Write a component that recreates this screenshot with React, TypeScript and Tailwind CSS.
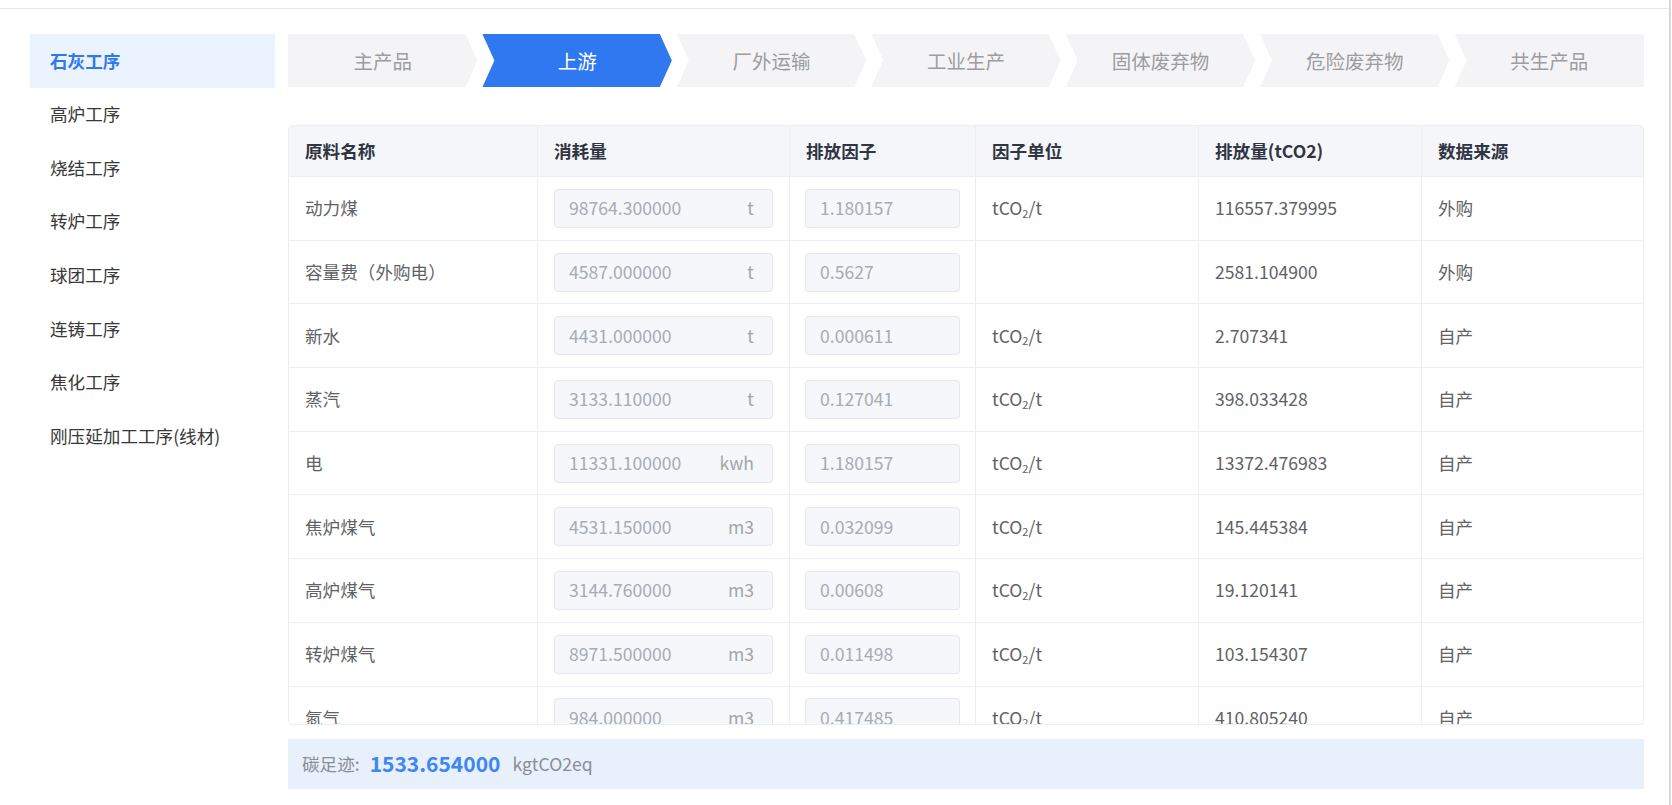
import React from "react";

const processes = [
  "石灰工序",
  "高炉工序",
  "烧结工序",
  "转炉工序",
  "球团工序",
  "连铸工序",
  "焦化工序",
  "刚压延加工工序(线材)",
];

const steps = ["主产品", "上游", "厂外运输", "工业生产", "固体废弃物", "危险废弃物", "共生产品"];

const rows = [
  { name: "动力煤", amount: "98764.300000", unit: "t", factor: "1.180157", fu: true, emission: "116557.379995", source: "外购" },
  { name: "容量费（外购电）", amount: "4587.000000", unit: "t", factor: "0.5627", fu: false, emission: "2581.104900", source: "外购" },
  { name: "新水", amount: "4431.000000", unit: "t", factor: "0.000611", fu: true, emission: "2.707341", source: "自产" },
  { name: "蒸汽", amount: "3133.110000", unit: "t", factor: "0.127041", fu: true, emission: "398.033428", source: "自产" },
  { name: "电", amount: "11331.100000", unit: "kwh", factor: "1.180157", fu: true, emission: "13372.476983", source: "自产" },
  { name: "焦炉煤气", amount: "4531.150000", unit: "m3", factor: "0.032099", fu: true, emission: "145.445384", source: "自产" },
  { name: "高炉煤气", amount: "3144.760000", unit: "m3", factor: "0.00608", fu: true, emission: "19.120141", source: "自产" },
  { name: "转炉煤气", amount: "8971.500000", unit: "m3", factor: "0.011498", fu: true, emission: "103.154307", source: "自产" },
  { name: "氮气", amount: "984.000000", unit: "m3", factor: "0.417485", fu: true, emission: "410.805240", source: "自产" },
];

const cols = "grid grid-cols-[249px_252px_186px_223px_223px_1fr]";

function Step({ label, index, active }: { label: string; index: number; active: boolean }) {
  const first = index === 0;
  const last = index === steps.length - 1;
  const shape = first
    ? "[clip-path:polygon(0_0,calc(100%_-_12px)_0,100%_50%,calc(100%_-_12px)_100%,0_100%)]"
    : last
    ? "[clip-path:polygon(0_0,100%_0,100%_100%,0_100%,12px_50%)]"
    : "[clip-path:polygon(0_0,calc(100%_-_12px)_0,100%_50%,calc(100%_-_12px)_100%,0_100%,12px_50%)]";
  return (
    <div
      className={`flex-1 h-[53px] flex items-center justify-center text-[19.5px] ${shape} ${
        active ? "bg-[#2f78ef] text-white" : "bg-[#f4f4f6] text-[#9d9d9f]"
      }`}
    >
      {label}
    </div>
  );
}

function Field({ value, unit }: { value: string; unit?: string }) {
  return (
    <div className="h-[39px] w-full flex items-center justify-between rounded-[4px] border border-[#e4e7ed] bg-[#f5f7fa] pl-[14px] pr-[18px] text-[#a8abb2]">
      <span>{value}</span>
      {unit && <span className="text-[#a3a5aa]">{unit}</span>}
    </div>
  );
}

function FactorUnit() {
  return (
    <span>
      tCO<sub className="text-[11px]">2</sub>/t
    </span>
  );
}

export default function App() {
  return (
    <div className="w-[1671px] h-[805px] overflow-hidden bg-white border-r-2 border-[#d9d9d9] font-['Noto_Sans_CJK_SC',sans-serif] text-[17.6px]">
      <div className="mt-2 border-t border-[#e6e6e6] flex pl-[30px] pt-[25px]">
        <aside className="w-[245px] flex flex-col">
          {processes.map((p, i) => (
            <div
              key={p}
              className={`h-[53.6px] flex items-center pl-5 ${
                i === 0 ? "bg-[#ebf3fe] text-[#2f78ef] font-bold" : "text-[#383838]"
              }`}
            >
              {p}
            </div>
          ))}
        </aside>

        <main className="ml-[13px] w-[1356px] flex flex-col">
          <div className="flex gap-[5px]">
            {steps.map((s, i) => (
              <Step key={s} label={s} index={i} active={i === 1} />
            ))}
          </div>

          <div className="mt-[38px] h-[600px] overflow-hidden rounded-[4px] border border-[#ebeef5]">
            <div className={`${cols} h-[51px] bg-[#f5f6f9] border-b border-[#ebeef5] font-bold text-[#2f3542]`}>
              {["原料名称", "消耗量", "排放因子", "因子单位", "排放量(tCO2)", "数据来源"].map((h, i) => (
                <div key={h} className={`flex items-center px-4 ${i < 5 ? "border-r border-[#ebeef5]" : ""}`}>
                  {h}
                </div>
              ))}
            </div>
            {rows.map((r) => (
              <div key={r.name} className={`${cols} h-[63.7px] border-b border-[#ebeef5] text-[#606266]`}>
                <div className="flex items-center px-4 border-r border-[#ebeef5]">{r.name}</div>
                <div className="flex items-center px-4 border-r border-[#ebeef5]">
                  <Field value={r.amount} unit={r.unit} />
                </div>
                <div className="flex items-center px-[15px] border-r border-[#ebeef5]">
                  <Field value={r.factor} />
                </div>
                <div className="flex items-center px-4 border-r border-[#ebeef5]">{r.fu && <FactorUnit />}</div>
                <div className="flex items-center px-4 border-r border-[#ebeef5]">{r.emission}</div>
                <div className="flex items-center px-4">{r.source}</div>
              </div>
            ))}
          </div>

          <div className="mt-[14px] h-[50px] flex items-center gap-[10px] bg-[#e8f0fc] px-[14px] text-[#8a8d94]">
            <span>碳足迹:</span>
            <span className="text-[21px] font-bold text-[#3d86f4]">1533.654000</span>
            <span className="ml-[2px]">kgtCO2eq</span>
          </div>
        </main>
      </div>
    </div>
  );
}
